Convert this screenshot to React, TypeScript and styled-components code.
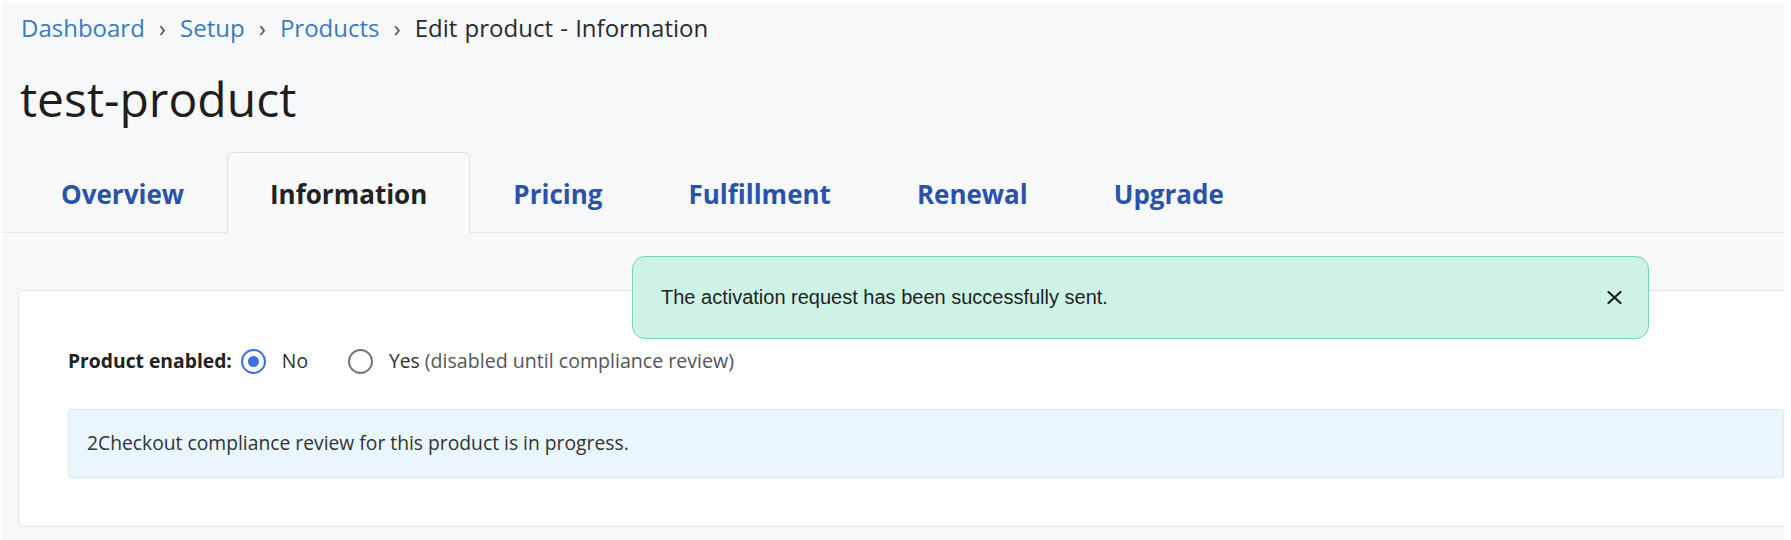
import React from "react";
import styled, { createGlobalStyle, css } from "styled-components";

const GlobalStyle = createGlobalStyle`
  html, body {
    margin: 0;
    padding: 0;
    background: #ffffff;
  }
  body {
    font-family: "Open Sans", "Noto Sans", Arial, sans-serif;
    color: #222;
    overflow: hidden;
  }
  * { box-sizing: border-box; }
`;

const Page = styled.div`
  position: relative;
  width: 1782px;
  min-height: 537px;
  margin: 3px 0 0 2px;
  background: #f7f8fa;
  overflow: hidden;
`;

const Header = styled.header`
  padding: 9px 0 0 19px;
`;

const Breadcrumb = styled.nav`
  display: flex;
  align-items: center;
  font-size: 24px;
  line-height: 32px;
  color: #2b2b2b;
`;

const Crumb = styled.a`
  color: #3a7cc0;
  text-decoration: none;
`;

const Sep = styled.span`
  color: #555;
  margin: 0 14px;
`;

const Current = styled.span`
  color: #2b2b2b;
  word-spacing: 1px;
`;

const Title = styled.h1`
  margin: 27px 0 0 -1px;
  font-size: 48px;
  font-weight: 400;
  line-height: 56px;
  color: #1e1e1e;
`;

const TabList = styled.div`
  display: flex;
  margin-top: 25px;
  padding-left: 16px;
  border-bottom: 1px solid #e4e6ea;
`;

const Tab = styled.a<{ $active?: boolean }>`
  display: block;
  padding: 23px 42px 20px;
  margin-bottom: -1px;
  font-size: 26px;
  font-weight: 700;
  line-height: 36px;
  color: #2a53a8;
  text-decoration: none;
  border: 1px solid transparent;
  border-radius: 6px 6px 0 0;
  ${(p) =>
    p.$active &&
    css`
      color: #222;
      background: #f8f9fb;
      border-color: #dfe2e6;
      border-bottom-color: #f8f9fb;
    `}
`;

const Body = styled.div`
  padding: 57px 0 14px 16px;
`;

const Card = styled.section`
  width: 1816px;
  background: #ffffff;
  border: 1px solid #e3e6ea;
  border-radius: 6px;
  padding: 56px 49px 48px;
`;

const RadioRow = styled.div`
  display: flex;
  align-items: center;
  height: 28px;
  font-size: 19.3px;
  line-height: 28px;
`;

const FieldLabel = styled.span`
  font-weight: 700;
  color: #222;
  margin-right: 9px;
`;

const Option = styled.label`
  display: flex;
  align-items: center;
  gap: 16px;
  margin-right: 40px;
  color: #2e2e2e;
`;

const Radio = styled.span<{ $checked?: boolean }>`
  display: inline-flex;
  align-items: center;
  justify-content: center;
  width: 25px;
  height: 25px;
  border-radius: 50%;
  border: 2px solid ${(p) => (p.$checked ? "#3d6fe3" : "#6f7782")};
  background: #fff;
  &::after {
    content: "";
    width: 11px;
    height: 11px;
    border-radius: 50%;
    background: ${(p) => (p.$checked ? "#3d6fe3" : "transparent")};
  }
`;

const Muted = styled.span`
  color: #555;
  font-size: 19.6px;
`;

const InfoBox = styled.div`
  margin-top: 34px;
  height: 69px;
  padding: 19px 18px;
  background: #e9f6fd;
  border: 1px solid #dfe8ee;
  border-radius: 3px;
  font-size: 19.3px;
  line-height: 28px;
  color: #333;
`;

const Toast = styled.div`
  position: absolute;
  left: 630px;
  top: 253px;
  width: 1017px;
  height: 83px;
  display: flex;
  align-items: center;
  justify-content: space-between;
  padding: 0 26px 0 28px;
  background: #cdf3e6;
  border: 1.5px solid #72d6b1;
  border-radius: 13px;
  font-family: "Liberation Sans", Arial, sans-serif;
  font-size: 20px;
  color: #1f1f1f;
`;

const CloseButton = styled.button`
  display: flex;
  align-items: center;
  justify-content: center;
  padding: 0;
  border: none;
  background: transparent;
  cursor: pointer;
`;

export default function App() {
  return (
    <>
      <GlobalStyle />
      <Page>
        <Header>
          <Breadcrumb>
            <Crumb href="#">Dashboard</Crumb>
            <Sep>›</Sep>
            <Crumb href="#">Setup</Crumb>
            <Sep>›</Sep>
            <Crumb href="#">Products</Crumb>
            <Sep>›</Sep>
            <Current>Edit product - Information</Current>
          </Breadcrumb>
          <Title>test-product</Title>
        </Header>
        <TabList>
          <Tab href="#">Overview</Tab>
          <Tab href="#" $active>
            Information
          </Tab>
          <Tab href="#">Pricing</Tab>
          <Tab href="#">Fulfillment</Tab>
          <Tab href="#">Renewal</Tab>
          <Tab href="#">Upgrade</Tab>
        </TabList>
        <Body>
          <Card>
            <RadioRow>
              <FieldLabel>Product enabled:</FieldLabel>
              <Option>
                <Radio $checked />
                No
              </Option>
              <Option>
                <Radio />
                <span>
                  Yes <Muted>(disabled until compliance review)</Muted>
                </span>
              </Option>
            </RadioRow>
            <InfoBox>2Checkout compliance review for this product is in progress.</InfoBox>
          </Card>
        </Body>
        <Toast role="status">
          <span>The activation request has been successfully sent.</span>
          <CloseButton aria-label="Close">
            <svg width="15" height="13" viewBox="0 0 15 13" fill="none">
              <path d="M1.5 1L13.5 12M13.5 1L1.5 12" stroke="#1f1f1f" strokeWidth="2.2" strokeLinecap="round" />
            </svg>
          </CloseButton>
        </Toast>
      </Page>
    </>
  );
}
